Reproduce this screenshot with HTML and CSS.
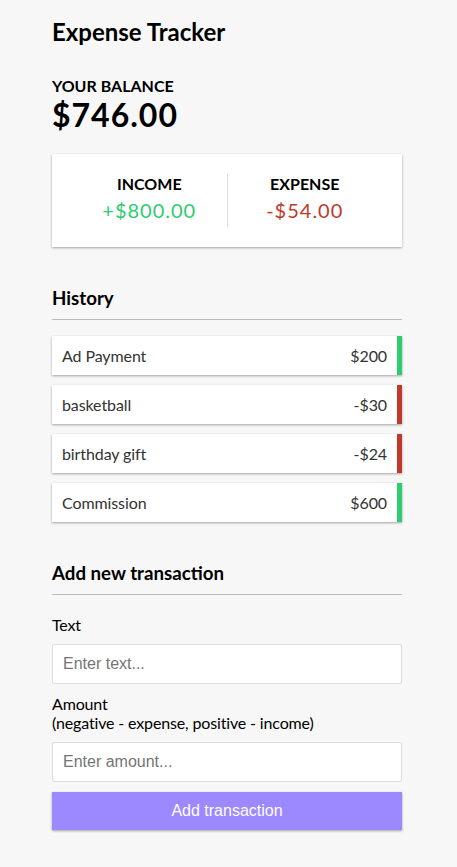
FILE: index.html
```html
<!DOCTYPE html>
<html lang="en">
<head>
<meta charset="UTF-8">
<title>Expense Tracker</title>
<link rel="stylesheet" href="styles.css">
</head>
<body>
<div class="app">
  <h2 class="title">Expense Tracker</h2>
  <div class="container">
    <h4>Your Balance</h4>
    <h1 class="balance">$746.00</h1>

    <div class="inc-exp-container">
      <div class="inc">
        <h4>Income</h4>
        <p class="money plus">+$800.00</p>
      </div>
      <div class="exp">
        <h4>Expense</h4>
        <p class="money minus">-$54.00</p>
      </div>
    </div>

    <h3>History</h3>
    <ul class="list">
      <li class="plus"><span>Ad Payment</span><span>$200</span></li>
      <li class="minus"><span>basketball</span><span>-$30</span></li>
      <li class="minus"><span>birthday gift</span><span>-$24</span></li>
      <li class="plus"><span>Commission</span><span>$600</span></li>
    </ul>

    <h3>Add new transaction</h3>
    <form class="form">
      <div class="form-control">
        <label for="text">Text</label>
        <input type="text" id="text" placeholder="Enter text...">
      </div>
      <div class="form-control">
        <label for="amount">Amount <br>(negative - expense, positive - income)</label>
        <input type="text" id="amount" placeholder="Enter amount...">
      </div>
      <button class="btn" type="button">Add transaction</button>
    </form>
  </div>
</div>
</body>
</html>
```

FILE: styles.css
```css
* {
  box-sizing: border-box;
}

body {
  background-color: #f7f7f7;
  margin: 0;
  font-family: Lato, "Noto Sans", sans-serif;
  font-size: 16px;
  color: #000;
}

.app {
  width: 350px;
  margin-left: 52px;
}

.title {
  font-size: 24px;
  line-height: 1.2;
  margin: 17.6px 0 0;
}

.container {
  margin-top: 30px;
}

h1 {
  font-size: 32px;
  line-height: 1.2;
  letter-spacing: 1px;
  margin: 0;
}

h3 {
  font-size: 18.72px;
  line-height: 22px;
  border-bottom: 1px solid #bbb;
  padding-bottom: 10px;
  margin: 40px 0 10px;
}

h4 {
  font-size: 16px;
  line-height: 1.2;
  margin: 0;
  text-transform: uppercase;
}

.inc-exp-container {
  background-color: #fff;
  box-shadow: 0 1px 3px rgba(0, 0, 0, 0.12), 0 1px 2px rgba(0, 0, 0, 0.24);
  padding: 20px;
  display: flex;
  justify-content: space-between;
  margin: 20px 0;
}

.inc-exp-container > div {
  flex: 1;
  text-align: center;
}

.inc-exp-container > .inc {
  border-right: 1px solid #dedede;
}

.money {
  font-size: 20px;
  line-height: 1.2;
  letter-spacing: 1px;
  margin: 5px 0;
}

.money.plus {
  color: #2ecc71;
}

.money.minus {
  color: #c0392b;
}

.list {
  list-style-type: none;
  padding: 0;
  margin: 16px 0 40px;
}

.list li {
  background-color: #fff;
  box-shadow: 0 1px 3px rgba(0, 0, 0, 0.12), 0 1px 2px rgba(0, 0, 0, 0.24);
  color: #333;
  display: flex;
  justify-content: space-between;
  padding: 10px;
  margin: 10px 0;
  line-height: 19px;
  letter-spacing: -0.1px;
}

.list li.plus {
  border-right: 5px solid #2ecc71;
}

.list li.minus {
  border-right: 5px solid #c0392b;
}

.form {
  margin: 0;
}

label {
  display: inline-block;
  margin: 10px 0;
  line-height: 19px;
  letter-spacing: -0.15px;
}

input {
  border: 1px solid #dedede;
  border-radius: 2px;
  display: block;
  font-family: "Liberation Sans", Arial, sans-serif;
  font-size: 16px;
  padding: 10px;
  width: 100%;
  background: #fff;
  color: #000;
}

input::placeholder {
  color: #757575;
}

.btn {
  cursor: pointer;
  background-color: #9c88ff;
  box-shadow: 0 1px 3px rgba(0, 0, 0, 0.12), 0 1px 2px rgba(0, 0, 0, 0.24);
  color: #fff;
  border: 0;
  display: block;
  font-family: "Liberation Sans", Arial, sans-serif;
  font-size: 16px;
  margin: 10px 0 30px;
  padding: 10px;
  width: 100%;
}
```
